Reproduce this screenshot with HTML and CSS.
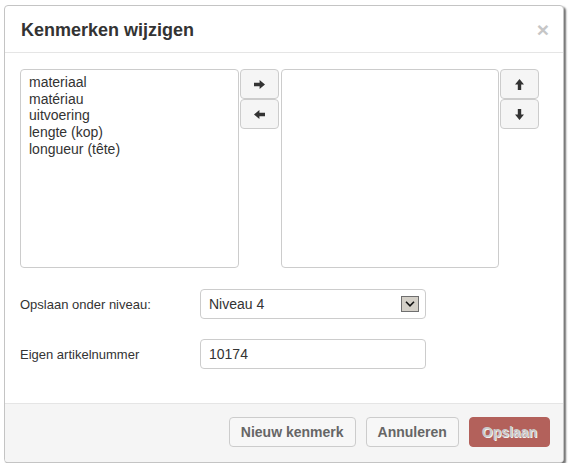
FILE: index.html
```html
<!DOCTYPE html>
<html lang="nl">
<head>
<meta charset="utf-8">
<title>Kenmerken wijzigen</title>
<link rel="stylesheet" href="styles.css">
</head>
<body>
<div class="dialog">
  <div class="dialog-header">
    <h4 class="dialog-title">Kenmerken wijzigen</h4>
    <span class="close">×</span>
  </div>
  <div class="dialog-body">
    <div class="picker">
      <div class="listbox listbox-left">
        <div class="item">materiaal</div>
        <div class="item">matériau</div>
        <div class="item">uitvoering</div>
        <div class="item">lengte (kop)</div>
        <div class="item">longueur (tête)</div>
      </div>
      <div class="btn-stack stack-move">
        <button class="icon-btn" type="button"><svg width="11" height="9" viewBox="0 0 11 9"><path d="M0 2.8h5.6V0L11 4.5 5.6 9V6.2H0z" fill="#333"/></svg></button>
        <button class="icon-btn" type="button"><svg width="11" height="9" viewBox="0 0 11 9"><path d="M11 2.8H5.4V0L0 4.5 5.4 9V6.2H11z" fill="#333"/></svg></button>
      </div>
      <div class="listbox listbox-right"></div>
      <div class="btn-stack stack-order">
        <button class="icon-btn" type="button"><svg width="9" height="11" viewBox="0 0 9 11"><path d="M4.5 0L9 5.4H6.2V11H2.8V5.4H0z" fill="#333"/></svg></button>
        <button class="icon-btn" type="button"><svg width="9" height="11" viewBox="0 0 9 11"><path d="M4.5 11L9 5.6H6.2V0H2.8v5.6H0z" fill="#333"/></svg></button>
      </div>
    </div>
    <div class="form-row row-level">
      <label class="form-label">Opslaan onder niveau:</label>
      <div class="select">
        <span>Niveau 4</span>
        <span class="select-arrow"><svg width="10" height="6" viewBox="0 0 10 6"><path d="M1 0.8l4 4 4-4" fill="none" stroke="#111" stroke-width="1.6"/></svg></span>
      </div>
    </div>
    <div class="form-row row-number">
      <label class="form-label">Eigen artikelnummer</label>
      <input class="text-input" type="text" value="10174">
    </div>
  </div>
  <div class="dialog-footer">
    <button class="btn" type="button">Nieuw kenmerk</button>
    <button class="btn" type="button">Annuleren</button>
    <button class="btn btn-save" type="button">Opslaan</button>
  </div>
</div>
</body>
</html>
```

FILE: styles.css
```css
* { box-sizing: border-box; }

html, body {
  margin: 0;
  padding: 0;
  background: #ffffff;
}

body {
  font-family: "Liberation Sans", Arial, sans-serif;
  color: #333333;
  padding: 5px 0 0 4px;
}

.dialog {
  width: 560px;
  height: 458px;
  background: #ffffff;
  border: 1px solid #c4c4c4;
  border-radius: 4px;
  box-shadow: 2px 2px 2px rgba(0, 0, 0, 0.55);
  display: flex;
  flex-direction: column;
  overflow: hidden;
}

.dialog-header {
  display: flex;
  align-items: center;
  justify-content: space-between;
  padding: 14px 14px 12px 16px;
  border-bottom: 1px solid #e5e5e5;
}

.dialog-title {
  margin: 0;
  font-size: 18px;
  line-height: 20px;
  font-weight: bold;
  color: #333333;
}

.close {
  font-size: 21px;
  font-weight: bold;
  line-height: 20px;
  color: #c6c6c6;
}

.dialog-body {
  flex: 1;
  padding: 16px 0 0 15px;
}

.picker {
  display: flex;
  align-items: flex-start;
  height: 199px;
}

.listbox {
  height: 199px;
  border: 1px solid #cccccc;
  border-radius: 4px;
  padding: 4px 8px;
  font-size: 14px;
  line-height: 16.7px;
  color: #333333;
}

.listbox-left { width: 219px; }

.listbox-right {
  width: 218px;
  margin-left: 2px;
}

.btn-stack {
  display: flex;
  flex-direction: column;
  margin-left: 1px;
}

.icon-btn {
  width: 39px;
  height: 30px;
  padding: 0;
  margin: 0;
  background: #f5f5f5;
  border: 1px solid #cccccc;
  border-radius: 4px;
  display: flex;
  align-items: center;
  justify-content: center;
}

.form-row {
  display: flex;
  align-items: center;
}

.row-level { margin-top: 21px; }
.row-number { margin-top: 20px; }

.form-label {
  width: 180px;
  font-size: 13px;
  color: #333333;
}

.select, .text-input {
  width: 226px;
  height: 30px;
  border: 1px solid #cccccc;
  border-radius: 4px;
  font-family: "Liberation Sans", Arial, sans-serif;
  font-size: 14px;
  color: #333333;
  background: #ffffff;
}

.select {
  display: flex;
  align-items: center;
  justify-content: space-between;
  padding: 0 6px 0 8px;
}

.select-arrow {
  width: 18px;
  height: 16px;
  background: #d4d0c8;
  border: 1px solid #6f6f6f;
  display: flex;
  align-items: center;
  justify-content: center;
}

.text-input {
  padding: 0 8px;
  outline: none;
}

.dialog-footer {
  display: flex;
  justify-content: flex-end;
  gap: 10px;
  padding: 13px 13px 13px 0;
  height: 59px;
  background: #f5f5f5;
  border-top: 1px solid #e5e5e5;
}

.btn {
  height: 30px;
  padding: 0 11px;
  margin: 0;
  font-family: "Liberation Sans", Arial, sans-serif;
  font-size: 14px;
  font-weight: bold;
  color: #666666;
  background: #f7f7f7;
  border: 1px solid #cccccc;
  border-radius: 4px;
}

.btn-save {
  padding: 0 12px;
  background: #b3615b;
  border-color: #b3615b;
  color: #c9c9c9;
  text-shadow: 1px 1px 0 #f2f2f2;
}
```
